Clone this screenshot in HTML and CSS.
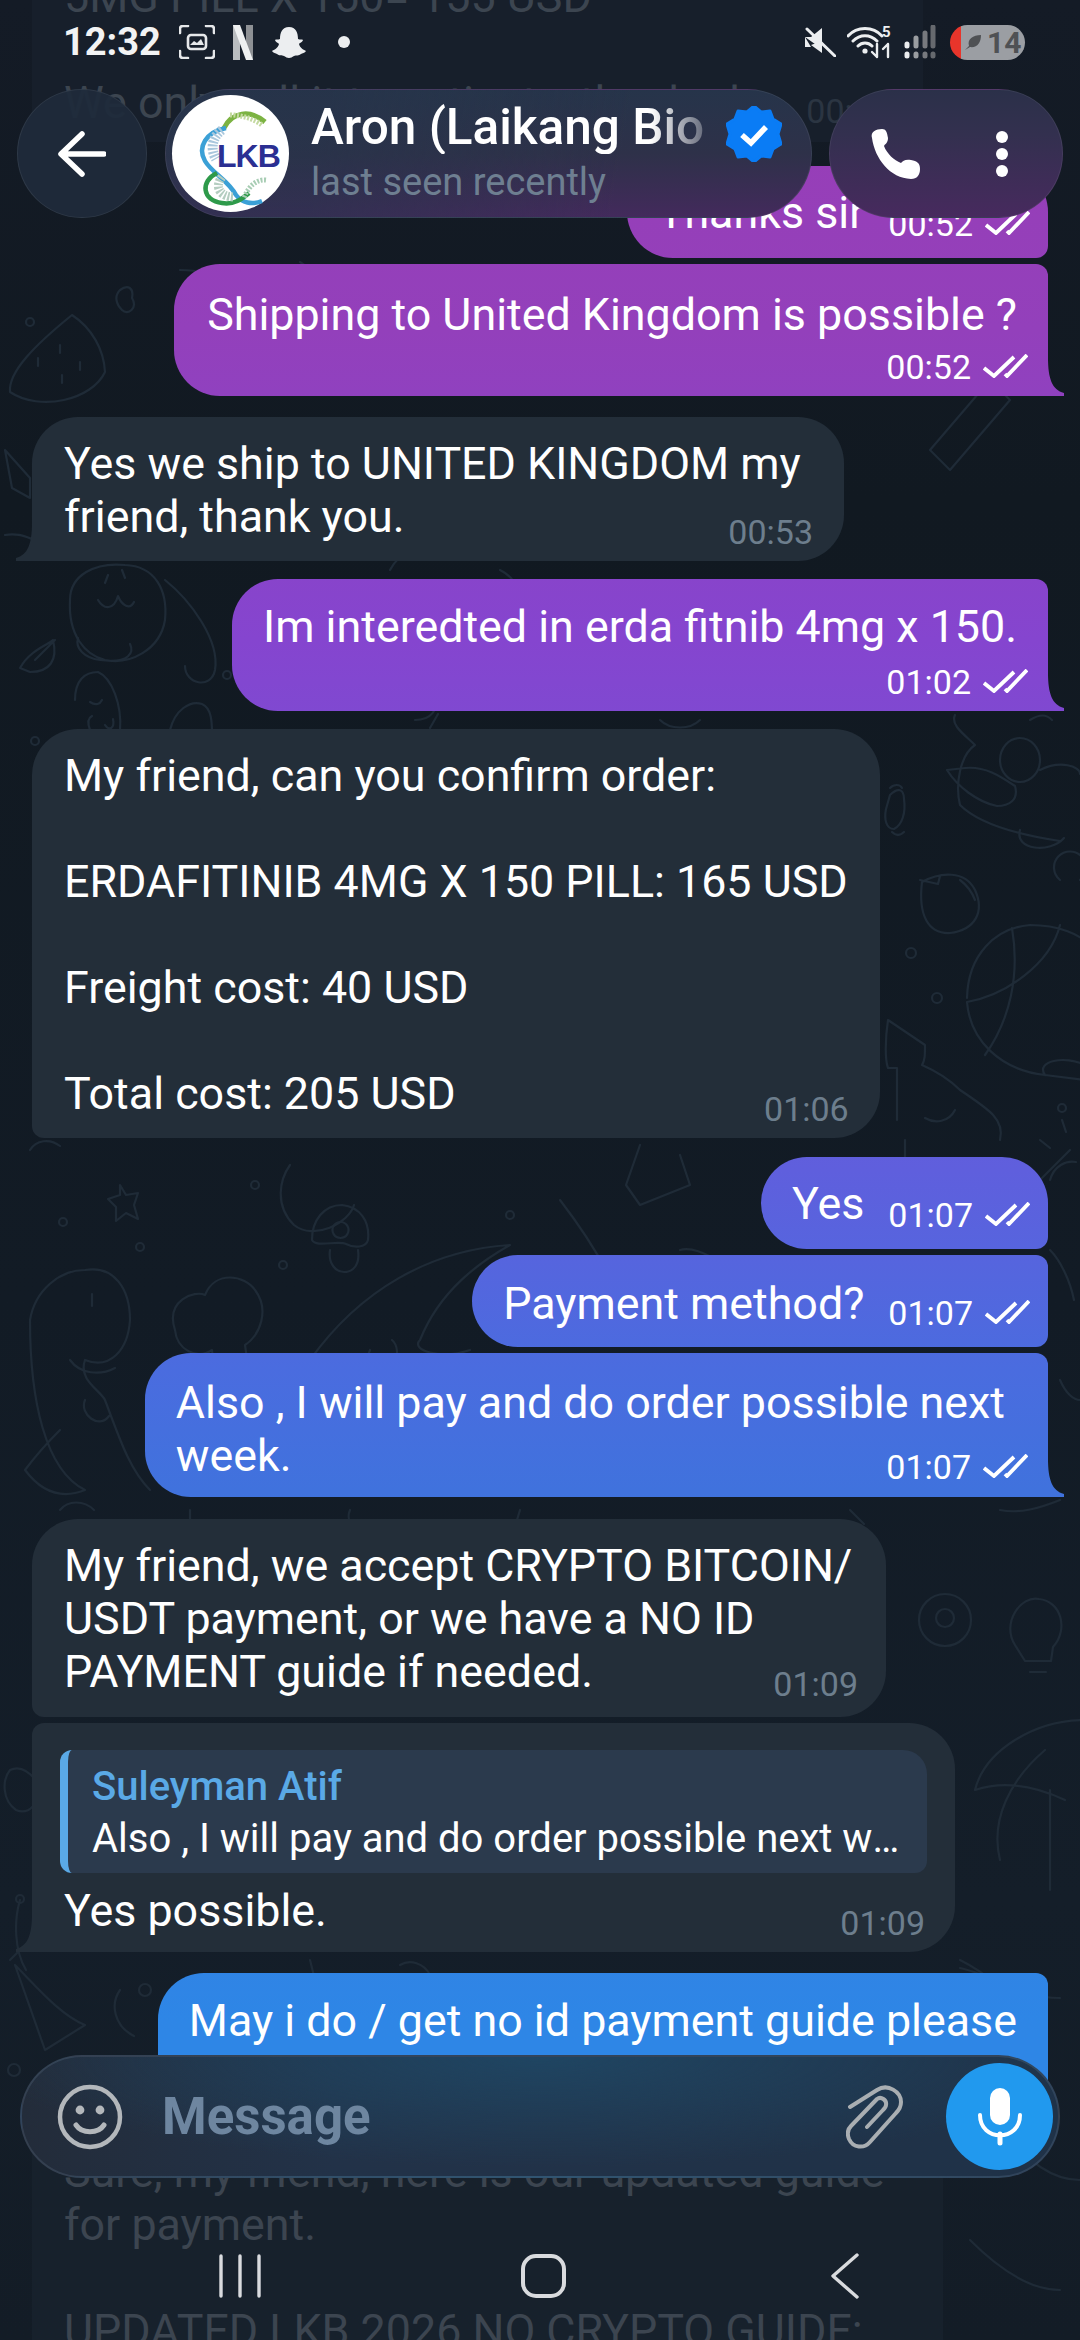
FILE: index.html
```html
<!DOCTYPE html>
<html lang="en">
<head>
  <meta charset="UTF-8" />
  <meta name="viewport" content="width=device-width, initial-scale=1.0"/>
  <title>Aron (Laikang Bio</title>
  <link rel="stylesheet" href="styles.css">
</head>
<body>
  <svg class="sprites" width="0" height="0">
    <symbol id="ticks" viewBox="0 0 45 24">
      <path d="M1 14 L11 22 L31 3 M22 20 L24 22 L44 1" fill="none" stroke="currentColor" stroke-width="3.8"/>
    </symbol>
  </svg>

  <!-- wallpaper doodles -->
  <svg class="doodles" viewBox="0 0 1080 2340" fill="none" stroke="#1f2b37" stroke-width="2.2" stroke-linecap="round" stroke-linejoin="round">
    <!-- watermelon -->
    <path d="M72 315 C35 345 8 372 10 392 C40 412 92 400 105 372 C104 350 92 328 72 315Z M38 358 v8 M60 345 v8 M80 362 v8 M62 375 v8"/>
    <path d="M120 290 c8 -6 14 -2 12 8 c6 10 -4 18 -10 12 c-6 -6 -8 -14 -2 -20Z M250 320 c-10 -30 -30 -50 -70 -50 M300 262 c30 20 40 50 20 80"/>
    <circle cx="30" cy="322" r="4"/>
    <path d="M420 270 c30 10 60 40 50 80 M560 270 c-10 20 -6 40 14 50 M700 285 c20 -6 60 -4 80 26 M820 270 v60 M880 270 c30 20 60 60 80 100 M930 450 l60 -70 l20 20 l-60 70Z"/>
    <!-- pencil, rabbit, leaf, ghost -->
    <path d="M5 450 L30 478 L30 498 L12 488Z M5 535 c20 -4 30 10 50 8"/>
    <path d="M70 600 C70 575 95 562 125 565 C155 566 168 590 165 620 C160 650 130 665 105 660 C85 655 68 635 70 600Z M98 600 c6 10 16 10 20 -4 c4 10 12 14 16 6 M108 575 l-3 8 M122 570 l3 8 M165 580 c25 20 55 60 50 90 c-4 20 -30 14 -30 -4 M78 638 c-3 10 6 20 22 22 c30 4 34 -8 30 -16"/>
    <path d="M20 668 C30 650 48 645 53 640 C58 660 50 672 30 672Z M35 660 l20 -20"/>
    <path d="M75 700 C75 680 85 672 98 672 C112 678 122 705 120 730 M90 702 c6 4 10 2 12 -2 M90 730 c-3 -8 -2 -12 2 -14 M105 725 c4 6 10 4 8 -6"/>
    <circle cx="35" cy="741" r="4"/><circle cx="227" cy="675" r="4"/>
    <path d="M170 730 c5 -20 20 -30 32 -26 c10 4 10 20 10 30 M415 720 c16 0 24 -10 20 -25 M430 728 l8 -14"/>
    <path d="M390 570 c10 -20 30 -20 40 -10 M500 570 c20 10 24 30 10 50 M590 580 c-6 20 -2 40 10 50 M660 720 c10 10 30 10 40 0"/>
    <!-- mid right: dragon, candy, apple, ball, tree -->
    <path d="M955 715 c-5 10 10 20 20 30 c-15 10 -20 40 -15 60 c20 20 60 30 100 36 M965 768 c20 -2 35 8 50 18 c4 14 -6 20 -18 20 c-20 -4 -40 -20 -50 -36Z M1000 760 a20 22 0 1 0 40 0 a20 22 0 1 0 -40 0 M1030 720 c10 -6 16 -6 22 0 M1040 770 c20 -10 40 -4 40 4 M1020 830 c-6 20 30 24 44 8 M1060 880 a16 16 0 1 1 20 0"/>
    <path d="M890 795 c8 -8 14 -6 14 4 c2 14 -2 26 -10 30 c-8 0 -10 -10 -8 -20Z M890 788 c4 -4 10 -4 12 0 M892 832 c4 4 8 4 12 0"/>
    <path d="M922 882 C940 872 965 870 975 890 C985 912 975 930 950 933 C928 934 918 915 922 882Z M920 880 l18 4 l2 -8 M960 880 c8 6 12 12 15 20"/>
    <circle cx="911" cy="953" r="5"/><circle cx="937" cy="998" r="5"/>
    <path d="M967 998 C968 955 995 928 1030 925 C1060 925 1080 935 1090 945 M967 1002 C1005 995 1050 965 1060 925 M1012 928 C1020 975 1010 1020 985 1055 M967 1002 C970 1040 1000 1070 1045 1075 L1085 1080 M1045 1075 c-10 -14 20 -20 40 -10"/>
    <path d="M888 1020 L925 1045 C925 1055 925 1060 922 1065 C945 1075 955 1085 960 1090 C990 1110 1005 1120 1000 1140 M888 1020 C885 1040 885 1060 888 1068 L897 1068 L897 1120 M905 1140 v40 M925 1118 c10 6 24 4 30 -8"/>
    <circle cx="1062" cy="1108" r="4"/>
    <path d="M1062 1120 l4 12 M1040 1140 l10 8 M1050 1180 c4 -14 16 -20 26 -18"/>
    <!-- dino, cloud tree, mushroom, star -->
    <path d="M30 1320 C35 1290 60 1270 85 1270 C115 1265 130 1290 130 1320 C128 1350 110 1370 85 1360 C78 1380 100 1390 105 1400 C120 1440 130 1470 150 1490 M30 1320 C30 1400 45 1470 85 1490 C60 1500 40 1490 25 1470 C40 1450 50 1440 60 1430 M70 1360 c10 14 30 16 45 8 M92 1294 v12 M85 1400 c-6 14 14 30 24 16"/>
    <path d="M175 1330 c-10 -30 20 -40 30 -35 c10 -25 40 -20 50 -5 c15 20 5 45 -10 55 l10 70 l-35 10 l-8 -75 c-15 10 -35 0 -37 -20Z M165 1365 c10 -10 24 -6 26 6 c0 10 -10 14 -18 10"/>
    <path d="M312 1240 c0 -20 12 -35 30 -35 c18 2 28 16 26 35 c-2 8 -14 8 -22 4 c-8 -4 -30 4 -34 -4Z M330 1250 c-2 14 6 22 14 22 c10 0 16 -8 14 -22 M340 1222 a8 8 0 1 0 1 0"/>
    <path d="M120 1185 l6 10 l12 -2 l-4 12 l4 14 l-12 -6 l-10 8 l0 -14 l-8 -8 l12 -4Z M290 1165 c-10 14 -16 40 4 60 c20 16 55 -2 60 -20"/>
    <circle cx="63" cy="1222" r="4"/><circle cx="140" cy="1247" r="4"/><circle cx="283" cy="1265" r="4"/><circle cx="255" cy="1185" r="4"/><circle cx="510" cy="1215" r="4"/>
    <path d="M310 1360 C360 1290 430 1250 510 1245 C480 1262 440 1290 420 1340 C410 1350 440 1360 470 1350 M370 1350 a14 20 20 1 0 22 -10"/>
    <path d="M560 1200 c20 26 44 60 60 100 M640 1145 l-14 40 l14 20 l50 -20 l-10 -30 M680 1250 c20 -6 60 20 80 60"/>
    <path d="M1040 1180 l30 -30 M1050 1250 c10 10 20 30 24 50 M1060 1380 c6 14 14 20 20 20"/>
    <path d="M30 1150 c6 -10 20 -12 30 -4 M60 1510 c8 -10 24 -10 34 0 M190 1510 v20 M350 1510 c-6 14 10 22 16 14 M520 1510 l-6 20 M850 1510 l14 14 M1000 1510 c20 4 40 -2 60 -10"/>
    <!-- lower right: bulb, eight ball, umbrella -->
    <circle cx="945" cy="1620" r="26"/><circle cx="945" cy="1618" r="9"/>
    <path d="M1015 1645 c-14 -22 6 -50 24 -46 c22 2 30 30 14 48 l-2 14 l-26 0Z M1030 1672 h16"/>
    <path d="M975 1790 c10 -40 60 -70 110 -70 M1000 1860 c-10 -40 10 -80 45 -110 M975 1790 c30 -10 60 -4 90 10 M1050 1790 v100 M960 1960 c20 10 50 30 60 60"/>
    <path d="M10 1770 c-8 10 -8 30 6 40 c14 6 22 -8 26 -22 c-8 -12 -20 -24 -32 -18Z M20 1900 c-6 20 -6 50 6 70 M10 1960 l20 -20"/>
    <circle cx="20" cy="1899" r="4"/><circle cx="145" cy="1990" r="6"/><circle cx="14" cy="2070" r="6"/>
    <path d="M15 1965 c20 20 45 50 70 60 l-40 25Z M120 1990 c-10 14 -6 36 14 46 M310 1960 l10 40 M400 1965 c10 -6 24 -2 30 10 M960 1968 c30 6 60 30 100 30 M1010 2140 c20 20 40 40 70 40 M970 2240 c30 30 60 50 90 50"/>
  </svg>

  <main class="chat">
    <div class="msg ghost ghost-top">
      <p>5MG PILL X 150= 155 USD<br><br>We only sell it to patients, thanked</p>
      <span class="meta dim">00:48</span>
    </div>

    <div class="msg out inline thanks">
      <p>Thanks sir</p>
      <span class="meta">00:52 <svg class="ticks"><use href="#ticks"/></svg></span>
    </div>
    <div class="msg out tail ship">
      <p>Shipping to United Kingdom is possible ?</p>
      <span class="meta">00:52 <svg class="ticks"><use href="#ticks"/></svg></span>
    </div>

    <div class="msg in tail we-ship">
      <p>Yes we ship to UNITED KINGDOM my<br>friend, thank you.</p>
      <span class="meta">00:53</span>
    </div>

    <div class="msg out tail interested">
      <p>Im interedted in erda fitnib 4mg x 150.</p>
      <span class="meta">01:02 <svg class="ticks"><use href="#ticks"/></svg></span>
    </div>

    <div class="msg in confirm">
      <p>My friend, can you confirm order:<br><br>ERDAFITINIB 4MG X 150 PILL: 165 USD<br><br>Freight cost: 40 USD<br><br>Total cost: 205 USD</p>
      <span class="meta">01:06</span>
    </div>

    <div class="msg out inline first">
      <p>Yes</p>
      <span class="meta">01:07 <svg class="ticks"><use href="#ticks"/></svg></span>
    </div>
    <div class="msg out inline middle">
      <p>Payment method?</p>
      <span class="meta">01:07 <svg class="ticks"><use href="#ticks"/></svg></span>
    </div>
    <div class="msg out tail over week">
      <p>Also , I will pay and do order possible next<br>week.</p>
      <span class="meta">01:07 <svg class="ticks"><use href="#ticks"/></svg></span>
    </div>

    <div class="msg in accept">
      <p>My friend, we accept CRYPTO BITCOIN/<br>USDT payment, or we have a NO ID<br>PAYMENT guide if needed.</p>
      <span class="meta">01:09</span>
    </div>
    <div class="msg in tail reply">
      <div class="quote">
        <strong>Suleyman Atif</strong>
        <span>Also , I will pay and do order possible next week.</span>
      </div>
      <p>Yes possible.</p>
      <span class="meta">01:09</span>
    </div>

    <div class="msg out guide">
      <p>May i do / get no id payment guide please</p>
    </div>

    <div class="msg ghost ghost-bottom">
      <p>Sure, my friend, here is our updated guide<br>for payment.<br><br>UPDATED LKB 2026 NO CRYPTO GUIDE:</p>
    </div>
  </main>

  <div class="statusbar">
    <div class="status-left">
      <span class="clock">12:32</span>
      <svg width="36" height="34" viewBox="0 0 36 34" fill="none" stroke="#e6e8ea" stroke-width="2.6" stroke-linecap="round">
        <path d="M1 8 V4 Q1 1 4 1 H9 M27 1 H32 Q35 1 35 4 V8 M1 26 V30 Q1 33 4 33 H9 M27 33 H32 Q35 33 35 30 V26"/>
        <rect x="9" y="10" width="18" height="14" rx="3"/>
        <path d="M11 20 L15 16 L18 18 L22 14 L25 20Z" fill="#e6e8ea" stroke="none"/>
      </svg>
      <svg width="20" height="35" viewBox="0 0 20 35">
        <rect x="0" y="0" width="7" height="35" fill="#b9bcbf"/>
        <rect x="13" y="0" width="7" height="35" fill="#8e9195"/>
        <path d="M0 0 H7 L20 35 H13Z" fill="#eef0f1"/>
      </svg>
      <svg width="36" height="32" viewBox="0 0 36 32">
        <path d="M18 1 C25 1 27 7 27 13 C29 14 31 13 32 14 C31 17 28 17 28 18 C29 22 33 24 35 25 C34 27 31 27 30 28 C28 30 25 29 23 30 C21 31 20 32 18 32 C16 32 15 31 13 30 C11 29 8 30 6 28 C5 27 2 27 1 25 C3 24 7 22 8 18 C8 17 5 17 4 14 C5 13 7 14 9 13 C9 7 11 1 18 1Z" fill="#eceef0"/>
      </svg>
      <span class="status-dot"></span>
    </div>
    <div class="status-right">
      <svg width="32" height="30" viewBox="0 0 32 30">
        <path d="M1 10 H7 L18 1 V22 M7 20 H1 V10" fill="#eceef0"/>
        <path d="M3 2 L31 29" stroke="#eceef0" stroke-width="3" stroke-linecap="round"/>
        <path d="M18 14 L18 26 L7 18Z" fill="#eceef0"/>
      </svg>
      <svg class="wifi" width="46" height="34" viewBox="0 0 46 34" fill="none" stroke="#eceef0" stroke-width="3" stroke-linecap="round">
        <path d="M1 11 C10 1 26 1 35 11 M6 16 C13 9 23 9 30 16 M11 21 C15 17 21 17 25 21"/>
        <circle cx="18" cy="26" r="2.6" fill="#eceef0" stroke="none"/>
        <path d="M30 19 V32 M25 27 L30 32 M41 32 V19 M36 24 L41 19" stroke-width="2.4"/>
        <text x="35" y="12" class="wifi-num">5</text>
      </svg>
      <svg width="32" height="34" viewBox="0 0 32 34" stroke-linecap="round" stroke-width="5" fill="none">
        <path d="M3 19 V21 M3 29 V31" stroke="#eceef0"/>
        <path d="M12 13 V21 M12 29 V31" stroke="#9a9da1"/>
        <path d="M21 8 V21 M21 29 V31" stroke="#77797e"/>
        <path d="M29 2 V21 M29 29 V31" stroke="#66696e"/>
      </svg>
      <span class="battery">
        <svg width="18" height="18" viewBox="0 0 18 18"><path d="M1 17 L5 13 C3 6 9 2 17 2 C17 10 13 15 6 14Z" fill="#4f5154"/></svg>
        14
      </span>
    </div>
  </div>

  <header class="topbar">
    <button class="round back" aria-label="Back">
      <svg width="48" height="46" viewBox="0 0 48 46" fill="none" stroke="#fff" stroke-width="5.5" stroke-linecap="round" stroke-linejoin="round"><path d="M46 23 H4 M24 3 L3 23 L24 43"/></svg>
    </button>
    <div class="peer">
      <div class="avatar">
        <svg width="117" height="117" viewBox="0 0 117 117" fill="none">
          <path d="M93 27 C78 14 60 17 52 33" stroke="#7cb342" stroke-width="5"/>
          <path d="M58 20 C70 20 82 24 90 30" stroke="#c4d9a0" stroke-width="5" stroke-dasharray="2 1.5"/>
          <path d="M54 33 C34 37 25 52 33 66 C40 78 56 85 64 100 C70 108 80 110 90 106" stroke="#3ba0d6" stroke-width="4.5"/>
          <path d="M50 35 C40 42 38 54 44 64" stroke="#a9c7dd" stroke-width="10" stroke-dasharray="2 1.5"/>
          <path d="M45 78 C28 86 30 106 50 108 C62 110 70 104 77 98" stroke="#2e9a4a" stroke-width="4.5"/>
          <path d="M50 82 C42 92 48 102 62 102" stroke="#b4cdc0" stroke-width="9" stroke-dasharray="2 1.5"/>
          <path d="M94 85 C84 84 76 92 72 103" stroke="#a8cdb4" stroke-width="5" stroke-dasharray="2 1.5"/>
          <text x="45" y="72" class="logo-text">LKB</text>
        </svg>
      </div>
      <div class="peer-text">
        <div class="peer-name">Aron (Laikang Bio</div>
        <div class="peer-seen">last seen recently</div>
      </div>
      <svg class="verified" width="56" height="56" viewBox="0 0 56 56">
        <path d="M28 0 L35 6 L44 5 L47 13 L55 18 L52 28 L55 38 L47 43 L44 51 L35 50 L28 56 L21 50 L12 51 L9 43 L1 38 L4 28 L1 18 L9 13 L12 5 L21 6Z" fill="#0a7cf5" stroke="#0a7cf5" stroke-width="3" stroke-linejoin="round"/>
        <path d="M16 29 L25 37 L40 21" fill="none" stroke="#fff" stroke-width="5.5"/>
      </svg>
    </div>
    <div class="round actions">
      <svg width="50" height="50" viewBox="0 0 50 50"><path d="M2 9 C0 3 6 0 12 0 C16 0 17 3 18 9 C18 14 15 15 14 17 C17 25 24 31 31 34 C33 32 35 30 41 31 C47 32 50 34 50 40 C50 46 47 50 41 50 C20 49 5 30 2 9Z" fill="#fff"/></svg>
      <span class="dots"><i></i><i></i><i></i></span>
    </div>
  </header>

  <div class="composer">
    <svg width="66" height="66" viewBox="0 0 66 66" fill="none" stroke="#b3b7bb" stroke-width="4.5" stroke-linecap="round">
      <circle cx="33" cy="33" r="30"/>
      <path d="M19 41 C25 50 41 50 47 41" stroke-width="5"/>
      <circle cx="23" cy="26" r="4.4" fill="#b3b7bb" stroke="none"/>
      <circle cx="43" cy="26" r="4.4" fill="#b3b7bb" stroke="none"/>
    </svg>
    <span class="placeholder">Message</span>
    <svg class="clip" width="58" height="66" viewBox="0 0 58 66" fill="none" stroke="#a9aeb2" stroke-width="4" stroke-linecap="round" stroke-linejoin="round">
      <path d="M4 23 L31 6 C42 -1 55 8 55 18 C55 22 53 26 50 29 L24 58 C18 65 7 64 3 55 C1 50 2 45 5 42 L31 15 C35 12 41 16 40 21 C40 23 38 25 37 26 L21 43"/>
    </svg>
    <button class="mic" aria-label="Record">
      <svg width="44" height="58" viewBox="0 0 44 58" fill="none" stroke="#fff" stroke-linecap="round">
        <rect x="12" y="0" width="20" height="37" rx="10" fill="#fff" stroke="none"/>
        <path d="M2 27 C2 54 42 54 42 27" stroke-width="4"/>
        <path d="M22 46 V55" stroke-width="5"/>
      </svg>
    </button>
  </div>

  <nav class="navbar">
    <svg width="44" height="44" viewBox="0 0 44 44" stroke="#d9dbde" stroke-width="3.4" stroke-linecap="round"><path d="M3 2 V42 M22 2 V42 M41 2 V42"/></svg>
    <span class="home"></span>
    <svg width="30" height="46" viewBox="0 0 30 46" fill="none" stroke="#d9dbde" stroke-width="3.4" stroke-linecap="round" stroke-linejoin="round"><path d="M27 2 L3 23 L27 44"/></svg>
  </nav>
</body>
</html>
```

FILE: styles.css
```css
* {
  box-sizing: border-box;
}
html, body {
  margin: 0;
  padding: 0;
}
body {
  position: relative;
  width: 1080px;
  height: 2340px;
  overflow: hidden;
  font-family: Roboto, "Liberation Sans", sans-serif;
  color: #fff;
  background: linear-gradient(180deg, #141b26 0, #111921 500px, #121b25 1300px, #141e29 1900px, #131c26 2340px);
}
p {
  margin: 0;
}
button {
  border: 0;
  padding: 0;
  color: inherit;
}
.sprites {
  position: absolute;
}
.doodles {
  position: absolute;
  top: 0;
  left: 0;
  width: 1080px;
  height: 2340px;
}

/* message list */
.chat {
  position: relative;
  display: flex;
  flex-direction: column;
  padding: 0 32px;
}
.msg {
  position: relative;
  display: flex;
  flex-direction: column;
  padding: 20px 32px 18px;
  font-size: 44.8px;
  line-height: 53px;
  border-radius: 46px;
}
.meta {
  display: flex;
  align-items: center;
  gap: 12px;
  align-self: flex-end;
  height: 33px;
  font-size: 34px;
  line-height: 33px;
  white-space: nowrap;
}
.ticks {
  width: 45px;
  height: 24px;
  margin-top: -4px;
}
.in {
  align-self: flex-start;
  background: #232e39;
  border-bottom-left-radius: 46px;
}
.in .meta {
  margin: -27px -1px -6px 0;
  color: #6d7e8d;
}
.out {
  align-self: flex-end;
  padding: 21px 20px 12px 31px;
  background: linear-gradient(180deg, #9a3db5 0, #9340bb 330px, #8545cf 640px, #5f5fdd 1170px, #4a6cdf 1370px, #4072dd 1490px, #2e86e6 2020px, #2e86e6 2340px) fixed;
  border-top-right-radius: 12px;
  border-bottom-right-radius: 12px;
}
.out p {
  padding-right: 11px;
}
.out .meta {
  margin-top: 13px;
}
.inline {
  flex-direction: row;
  padding: 20px 18px 19px 31px;
  gap: 24px;
}
.inline p {
  padding-right: 0;
}
.inline .meta {
  margin: 0 0 -2px;
}
.over {
  padding-bottom: 18px;
}
.over .meta {
  margin: -28px 0 -5px;
}

/* tails */
.out.tail {
  border-bottom-right-radius: 0;
}
.out.tail::after {
  content: "";
  position: absolute;
  right: -16px;
  bottom: 0;
  width: 16px;
  height: 38px;
  background: inherit;
  clip-path: path("M0 0 C0 20 4 32 16 35 L16 38 L0 38Z");
}
.in.tail {
  border-bottom-left-radius: 0;
}
.in.tail::after {
  content: "";
  position: absolute;
  left: -16px;
  bottom: 0;
  width: 16px;
  height: 38px;
  background: #232e39;
  clip-path: path("M16 0 C16 20 12 32 0 35 L0 38 L16 38Z");
}

/* one off spacing, the list is not evenly spaced */
.thanks { margin-top: 24px; border-top-right-radius: 46px; }
.ship { margin-top: 6px; padding: 24px 20px 14px 33px; height: 132px; }
.ship .meta { margin-top: 10px; }
.we-ship { margin-top: 21px; width: 812px; }
.interested { margin-top: 18px; }
.confirm { margin-top: 18px; border-bottom-left-radius: 12px; }
.first { margin-top: 19px; border-top-right-radius: 46px; }
.middle { margin-top: 6px; padding-top: 22px; padding-bottom: 17px; }
.middle .meta { margin-bottom: 0; }
.week { margin-top: 6px; padding-top: 23px; padding-bottom: 15px; }
.week p { padding-right: 23px; }
.week .meta { margin: -31px 0 -2px; }
.accept { margin-top: 22px; width: 854px; height: 198px; border-bottom-left-radius: 12px; }
.accept .meta { margin: -30px -4px -3px 0; }
.reply { margin-top: 6px; width: 923px; padding: 27px 28px 15px 28px; border-top-left-radius: 12px; }
.reply .meta { margin: -30px 2px -3px 0; }
.guide { margin-top: 21px; height: 130px; border-bottom-right-radius: 0; }

/* dimmed messages behind the bars */
.ghost {
  width: 891px;
  color: #3c4550;
  background: #171f2b;
  border-radius: 0;
}
.ghost-top {
  margin-top: -50px;
  padding-bottom: 14px;
}
.meta.dim {
  margin: -34px 0 0 0;
  color: #2b3542;
}
.ghost-bottom {
  margin-top: 14px;
  width: 911px;
  background: #17212c;
  padding-top: 28px;
}

/* quoted message */
.quote {
  display: flex;
  flex-direction: column;
  height: 123px;
  margin-bottom: 11px;
  padding: 11px 16px 0 24px;
  font-size: 40px;
  line-height: 52px;
  background: #2b3a4d;
  border-left: 8px solid #5aa9e6;
  border-radius: 12px 24px 12px 12px;
}
.quote strong {
  font-weight: 500;
  color: #5aa9e6;
}
.quote span {
  white-space: nowrap;
  overflow: hidden;
  text-overflow: ellipsis;
}
.reply p {
  padding-left: 4px;
}

/* status bar */
.statusbar {
  position: absolute;
  top: 24px;
  left: 63px;
  right: 55px;
  height: 36px;
  display: flex;
  justify-content: space-between;
  align-items: center;
}
.status-left, .status-right {
  display: flex;
  align-items: center;
}
.status-left {
  gap: 18px;
}
.status-right {
  gap: 11px;
}
.clock {
  font-size: 38px;
  font-weight: 700;
  line-height: 36px;
  color: #f2f3f4;
}
.status-dot {
  width: 12px;
  height: 12px;
  margin-left: 13px;
  background: #eceef0;
  border-radius: 50%;
}
.wifi-num {
  font-size: 15px;
  font-weight: 700;
  fill: #eceef0;
  stroke: none;
}
.battery {
  display: flex;
  align-items: center;
  gap: 5px;
  width: 75px;
  height: 35px;
  padding-left: 14px;
  margin-left: 3px;
  font-size: 30px;
  font-weight: 700;
  color: #4f5154;
  background: linear-gradient(90deg, #e8352b 11px, #9b9ea3 11px);
  border-radius: 18px;
}

/* top bar */
.topbar {
  position: absolute;
  top: 89px;
  left: 17px;
  right: 17px;
  display: flex;
  justify-content: space-between;
}
.round {
  height: 129px;
  border-radius: 65px;
  display: flex;
  align-items: center;
  border: 1px solid rgba(255, 255, 255, 0.07);
}
.back {
  width: 130px;
  justify-content: center;
  background: rgba(31, 43, 58, 0.94);
}
.peer {
  display: flex;
  align-items: center;
  width: 647px;
  height: 129px;
  margin-left: 18px;
  padding-left: 6px;
  border: 1px solid rgba(255, 255, 255, 0.07);
  border-radius: 65px;
  background:
    linear-gradient(100deg, rgba(38, 52, 74, 0.55) 25%, rgba(68, 42, 92, 0) 70%),
    linear-gradient(180deg, #26344a 0, #2e3149 50%, #432a5c 100%);
}
.avatar {
  flex: none;
  width: 117px;
  height: 117px;
  background: #fff;
  border-radius: 50%;
}
.logo-text {
  font-family: "Liberation Sans", sans-serif;
  font-size: 32px;
  font-weight: 700;
  fill: #2b2f92;
  letter-spacing: -1px;
}
.peer-text {
  flex: none;
  margin-left: 22px;
  width: 392px;
}
.peer-name {
  margin-top: -4px;
  font-size: 49.5px;
  font-weight: 500;
  line-height: 54px;
  white-space: nowrap;
  overflow: hidden;
  -webkit-mask-image: linear-gradient(90deg, #000 340px, rgba(0, 0, 0, 0.3) 392px);
  mask-image: linear-gradient(90deg, #000 340px, rgba(0, 0, 0, 0.3) 392px);
}
.peer-seen {
  margin-top: 6px;
  font-size: 38px;
  line-height: 44px;
  color: #6e7f91;
}
.verified {
  flex: none;
  margin: -39px 0 0 23px;
}
.actions {
  width: 234px;
  justify-content: space-between;
  padding: 0 54px 0 40px;
  margin-left: 17px;
  background: linear-gradient(180deg, #2b3049 0, #33304f 35%, #472a5e 100%);
}
.dots {
  display: flex;
  flex-direction: column;
  gap: 5px;
}
.dots i {
  width: 12px;
  height: 12px;
  background: #fff;
  border-radius: 50%;
}

/* composer */
.composer {
  position: absolute;
  top: 2055px;
  left: 20px;
  width: 1040px;
  height: 123px;
  display: flex;
  align-items: center;
  padding: 0 5px 0 35px;
  border-radius: 62px;
  border: 2px solid rgba(140, 165, 190, 0.16);
  background:
    radial-gradient(ellipse 560px 110px at 50% 0, #1f4562 0, rgba(31, 69, 98, 0) 100%),
    linear-gradient(90deg, #232c3a 0, #223248 30%, #1f3248 100%);
}
.placeholder {
  margin-left: 39px;
  font-size: 51px;
  font-weight: 700;
  color: #6e86a0;
}
.clip {
  margin-left: auto;
}
.mic {
  display: flex;
  align-items: center;
  justify-content: center;
  width: 107px;
  height: 107px;
  margin-left: 42px;
  background: #2199ee;
  border-radius: 50%;
}

/* android nav */
.navbar {
  position: absolute;
  top: 2253px;
  left: 218px;
  width: 642px;
  display: flex;
  align-items: center;
  justify-content: space-between;
}
.home {
  width: 45px;
  height: 44px;
  margin-left: -6px;
  border: 4px solid #d9dbde;
  border-radius: 15px;
}
```
